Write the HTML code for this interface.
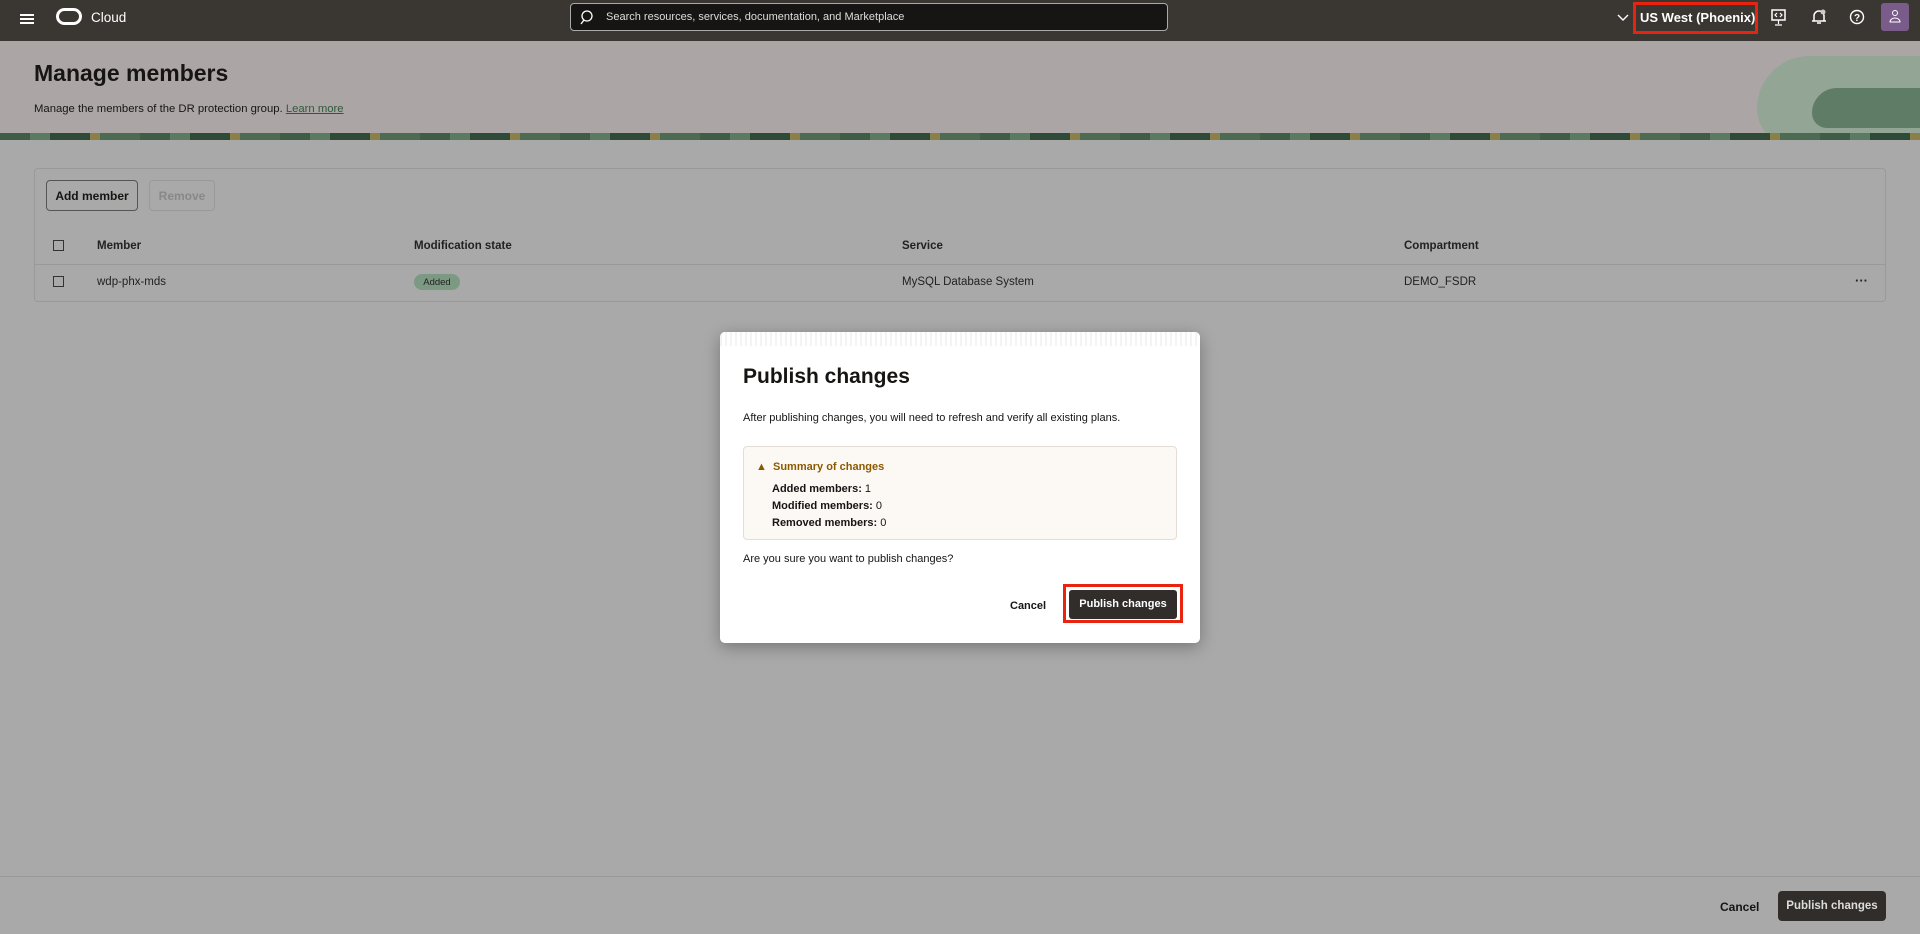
<!DOCTYPE html>
<html><head><meta charset="utf-8"><style>
*{box-sizing:border-box;margin:0;padding:0}
body{width:1920px;height:934px;overflow:hidden;background:#a9a9a9;font-family:"Liberation Sans",sans-serif;color:#161513;position:relative}
.top{position:absolute;left:0;top:0;width:1920px;height:41px;background:#3a3632;color:#fff}
.hero{position:absolute;left:0;top:41px;width:1920px;height:93px;background:#aba6a5;overflow:hidden}
.band{position:absolute;left:0;top:133px;width:1920px;height:7px;background:repeating-linear-gradient(90deg,#3f5c46 0 30px,#5a7a61 30px 50px,#2f4a36 50px 90px,#8a8048 90px 100px,#4d6b53 100px 140px)}
.abs{position:absolute}
.panel{position:absolute;left:34px;top:168px;width:1852px;height:134px;border:1px solid #999;border-radius:4px;background:#a9a9a9}
.btn{position:absolute;border:1px solid #555;border-radius:4px;font-size:12px;font-weight:bold;display:flex;align-items:center;justify-content:center}
.cb{position:absolute;width:11px;height:11px;border:1px solid #333}
.th{position:absolute;top:240px;font-size:11.5px;font-weight:bold;color:#222}
.td{position:absolute;top:276px;font-size:11.5px;color:#222}
.modal{position:absolute;left:720px;top:332px;width:480px;height:311px;background:#fff;border-radius:5px;box-shadow:0 4px 16px rgba(0,0,0,.3)}
</style></head><body>
<div class="top">
 <div class="abs" style="left:20px;top:14px;width:14px;height:2px;background:#fff;box-shadow:0 4px 0 #fff,0 8px 0 #fff"></div>
 <div class="abs" style="left:56px;top:8px;width:26px;height:17px;border:3px solid #fff;border-radius:9px"></div>
 <div class="abs" style="left:91px;top:10px;font-size:13.5px">Cloud</div>
 <div class="abs" style="left:570px;top:3px;width:598px;height:28px;background:#161513;border:1px solid #aaa;border-radius:4px"></div>
 <svg class="abs" style="left:580px;top:9px" width="16" height="16"><circle cx="7" cy="7" r="5" stroke="#fff" fill="none" stroke-width="1.3"/><line x1="4" y1="11" x2="1" y2="15" stroke="#fff" stroke-width="1.3"/></svg>
 <div class="abs" style="left:606px;top:11px;font-size:11px;color:#ddd">Search resources, services, documentation, and Marketplace</div>
 <svg class="abs" style="left:1617px;top:13px" width="12" height="10"><path d="M1 2l5 5 5-5" stroke="#fff" fill="none" stroke-width="1.4"/></svg>
 <div class="abs" style="left:1633px;top:2px;width:125px;height:32px;border:3px solid #e8230f"></div>
 <div class="abs" style="left:1640px;top:10px;font-size:13px;font-weight:bold">US West (Phoenix)</div>
 <svg class="abs" style="left:1771px;top:9px" width="16" height="18"><rect x="1" y="1" width="13" height="10" stroke="#fff" fill="none" stroke-width="1.5"/><path d="M7.5 11v4M4 16h7M6 4l-2 2 2 2M9 4l2 2-2 2" stroke="#fff" fill="none" stroke-width="1.2"/></svg>
 <svg class="abs" style="left:1811px;top:8px" width="16" height="18"><path d="M3 13V8a5 5 0 0110 0v5zM1 13h14M6 15h4" stroke="#fff" fill="none" stroke-width="1.5"/><circle cx="12" cy="4" r="2.5" fill="#ccc"/></svg>
 <svg class="abs" style="left:1849px;top:9px" width="16" height="16"><circle cx="8" cy="8" r="6.5" stroke="#fff" fill="none" stroke-width="1.4"/><text x="8" y="12" font-size="10" fill="#fff" text-anchor="middle" font-family="Liberation Sans" font-weight="bold">?</text></svg>
 <div class="abs" style="left:1881px;top:3px;width:28px;height:28px;background:#7a5c8a;border-radius:3px"></div>
 <svg class="abs" style="left:1888px;top:9px" width="14" height="14"><circle cx="7" cy="4" r="2.5" stroke="#fff" fill="none"/><path d="M2 13a5 4 0 0110 0z" stroke="#fff" fill="none"/></svg>
</div>
<div class="hero">
 <div class="abs" style="left:1757px;top:15px;width:180px;height:90px;background:#93a595;border-radius:70px 0 0 50px"></div>
 <div class="abs" style="left:1812px;top:47px;width:120px;height:40px;background:#5f7c66;border-radius:50px 0 0 30px"></div>
 <div class="abs" style="left:34px;top:19px;font-size:23px;font-weight:bold">Manage members</div>
 <div class="abs" style="left:34px;top:62px;font-size:11.3px">Manage the members of the DR protection group. <span style="color:#2e5a3a;text-decoration:underline">Learn more</span></div>
</div>
<div class="band"></div>
<div class="panel"></div>
<div class="btn" style="left:46px;top:180px;width:92px;height:31px">Add member</div>
<div class="btn" style="left:149px;top:180px;width:66px;height:31px;border-color:#999;color:#888">Remove</div>
<div class="cb" style="left:53px;top:240px"></div>
<div class="th" style="left:97px">Member</div>
<div class="th" style="left:414px">Modification state</div>
<div class="th" style="left:902px">Service</div>
<div class="th" style="left:1404px">Compartment</div>
<div class="abs" style="left:35px;top:264px;width:1850px;height:1px;background:#999"></div>
<div class="cb" style="left:53px;top:276px"></div>
<div class="td" style="left:97px">wdp-phx-mds</div>
<div class="abs" style="left:414px;top:274px;width:46px;height:16px;border-radius:8px;background:#7c9a83;font-size:9.5px;text-align:center;line-height:17px;color:#222">Added</div>
<div class="td" style="left:902px">MySQL Database System</div>
<div class="td" style="left:1404px">DEMO_FSDR</div>
<div class="td" style="left:1855px;top:273px;font-weight:bold;font-size:13px">···</div>
<div class="abs" style="left:0;top:876px;width:1920px;height:1px;background:#999"></div>
<div class="abs" style="left:1720px;top:900px;font-size:12px;font-weight:bold">Cancel</div>
<div class="abs" style="left:1778px;top:891px;width:108px;height:30px;background:#312d2a;border-radius:4px;color:#ddd;font-size:11.5px;font-weight:bold;text-align:center;line-height:30px">Publish changes</div>
<div class="modal">
 <div style="height:14px;background:repeating-linear-gradient(90deg,#f4f4f4 0 2px,#fff 2px 5px);border-radius:5px 5px 0 0"></div>
 <div class="abs" style="left:23px;top:33px;font-size:21px;font-weight:bold">Publish changes</div>
 <div class="abs" style="left:23px;top:80px;font-size:11px">After publishing changes, you will need to refresh and verify all existing plans.</div>
 <div class="abs" style="left:23px;top:114px;width:434px;height:94px;background:#fcf8f4;border:1px solid #e4ddd5;border-radius:4px">
  <div class="abs" style="left:12px;top:14px;font-size:11px;font-weight:bold;color:#8b5a00">▲&nbsp; Summary of changes</div>
  <div class="abs" style="left:28px;top:34px;font-size:11px;line-height:17px"><b>Added members:</b> 1<br><b>Modified members:</b> 0<br><b>Removed members:</b> 0</div>
 </div>
 <div class="abs" style="left:23px;top:221px;font-size:11px">Are you sure you want to publish changes?</div>
 <div class="abs" style="left:290px;top:268px;font-size:11px;font-weight:bold">Cancel</div>
 <div class="abs" style="left:343px;top:252px;width:120px;height:39px;border:3px solid #e8230f"></div>
 <div class="abs" style="left:349px;top:258px;width:108px;height:29px;background:#312d2a;border-radius:3px;color:#fff;font-size:11px;font-weight:bold;text-align:center;line-height:29px">Publish changes</div>
</div>
</body></html>
